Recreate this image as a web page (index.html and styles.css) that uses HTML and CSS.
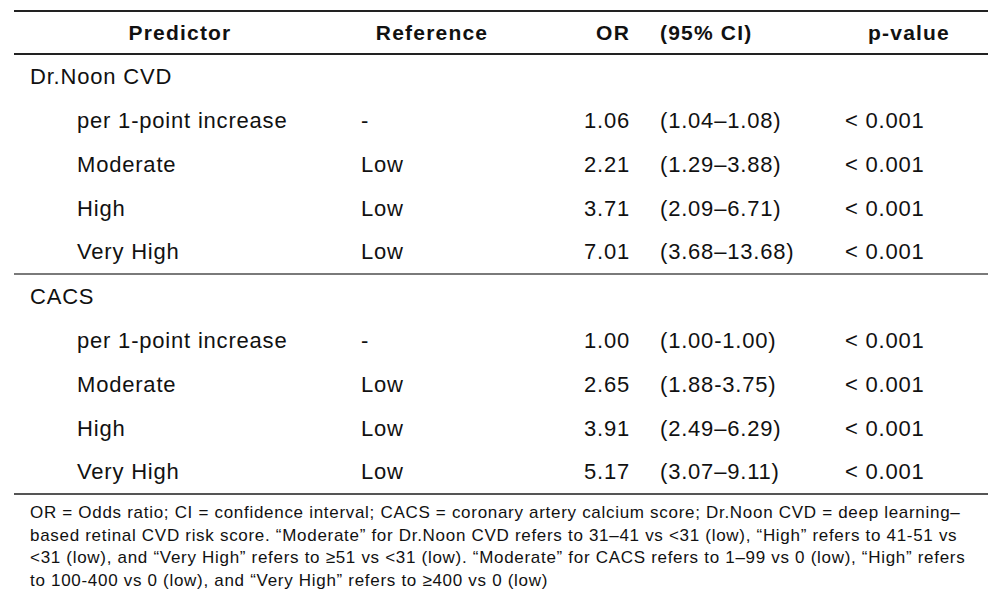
FILE: index.html
```html
<!DOCTYPE html>
<html>
<head>
<meta charset="utf-8">
<link rel="stylesheet" href="styles.css">
</head>
<body>
<div class="wrap">
<table class="or-table">
  <colgroup>
    <col class="c1"><col class="c2"><col class="c3"><col class="c4"><col class="c5">
  </colgroup>
  <thead>
    <tr>
      <th class="th-center">Predictor</th>
      <th class="th-center">Reference</th>
      <th class="th-right">OR</th>
      <th class="th-left">(95% CI)</th>
      <th class="th-center">p-value</th>
    </tr>
  </thead>
  <tbody>
    <tr class="group"><td colspan="5">Dr.Noon CVD</td></tr>
    <tr><td class="sub">per 1-point increase</td><td>-</td><td class="num">1.06</td><td>(1.04–1.08)</td><td>&lt; 0.001</td></tr>
    <tr><td class="sub">Moderate</td><td>Low</td><td class="num">2.21</td><td>(1.29–3.88)</td><td>&lt; 0.001</td></tr>
    <tr><td class="sub">High</td><td>Low</td><td class="num">3.71</td><td>(2.09–6.71)</td><td>&lt; 0.001</td></tr>
    <tr class="end mid"><td class="sub">Very High</td><td>Low</td><td class="num">7.01</td><td>(3.68–13.68)</td><td>&lt; 0.001</td></tr>
    <tr class="group"><td colspan="5">CACS</td></tr>
    <tr><td class="sub">per 1-point increase</td><td>-</td><td class="num">1.00</td><td>(1.00-1.00)</td><td>&lt; 0.001</td></tr>
    <tr><td class="sub">Moderate</td><td>Low</td><td class="num">2.65</td><td>(1.88-3.75)</td><td>&lt; 0.001</td></tr>
    <tr><td class="sub">High</td><td>Low</td><td class="num">3.91</td><td>(2.49–6.29)</td><td>&lt; 0.001</td></tr>
    <tr class="end last"><td class="sub">Very High</td><td>Low</td><td class="num">5.17</td><td>(3.07–9.11)</td><td>&lt; 0.001</td></tr>
  </tbody>
</table>
<p class="note">OR = Odds ratio; CI = confidence interval; CACS = coronary artery calcium score; Dr.Noon CVD = deep learning–based retinal CVD risk score. “Moderate” for Dr.Noon CVD refers to 31–41 vs &lt;31 (low), “High” refers to 41-51 vs &lt;31 (low), and “Very High” refers to ≥51 vs &lt;31 (low). “Moderate” for CACS refers to 1–99 vs 0 (low), “High” refers to 100-400 vs 0 (low), and “Very High” refers to ≥400 vs 0 (low)</p>
</div>
</body>
</html>
```

FILE: styles.css
```css
html, body {
  margin: 0;
  padding: 0;
  background: #fff;
}
body {
  font-family: "Liberation Sans", Arial, sans-serif;
  color: #111;
}
.wrap {
  width: 974px;
  padding: 10px 0 0 14px;
}
.or-table {
  width: 974px;
  border-collapse: separate;
  border-spacing: 0;
  table-layout: fixed;
}
.c1 { width: 332px; }
.c2 { width: 172px; }
.c3 { width: 127px; }
.c4 { width: 185px; }
.c5 { width: 158px; }

.or-table th {
  font-size: 21px;
  font-weight: bold;
  letter-spacing: 1.2px;
  line-height: 41px;
  padding: 0 15px;
  border-top: 2px solid #222;
  border-bottom: 2px solid #222;
  white-space: nowrap;
}
.th-center { text-align: center; }
.th-right { text-align: right; }
.th-left { text-align: left; }

.or-table td {
  font-size: 22px;
  letter-spacing: 0.8px;
  line-height: 44px;
  padding: 0 15px;
  white-space: nowrap;
  text-align: left;
}
.or-table td.num { text-align: right; }
.or-table td.sub { padding-left: 63px; }
.group td { padding-left: 16px; }

.end td {
  line-height: 42px;
}
.mid td { border-bottom: 2px solid #7a7a7a; }
.last td { border-bottom: 2px solid #555; }

.note {
  margin: 7px 0 0 0;
  padding: 0 12px 0 16px;
  font-size: 17px;
  line-height: 22.7px;
  letter-spacing: 0.7px;
}
```
